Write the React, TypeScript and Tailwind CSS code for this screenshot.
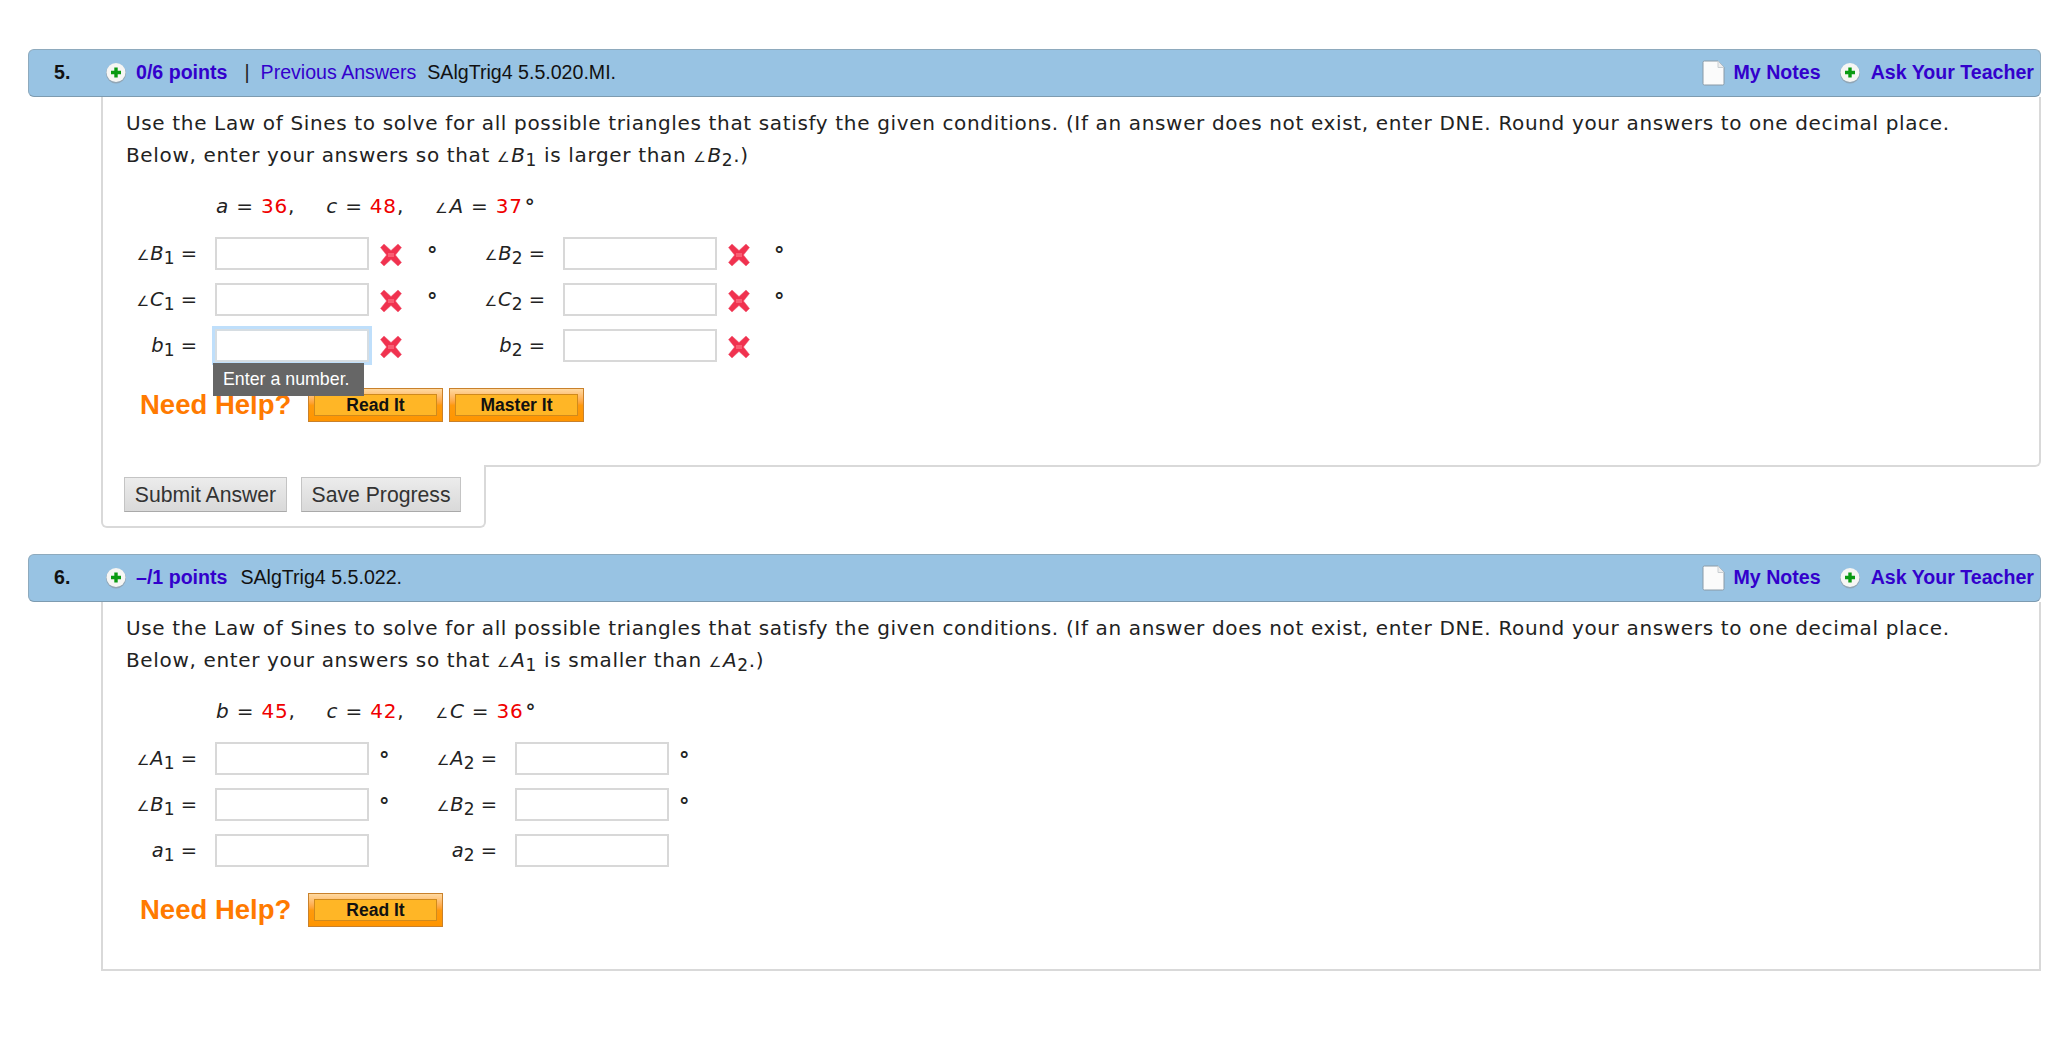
import React from "react";

const Plus = () => (
  <svg width="22" height="22" viewBox="0 0 22 22" className="shrink-0">
    <circle cx="11" cy="11.5" r="10" fill="#8f9aa3" opacity="0.7" />
    <circle cx="11" cy="10.5" r="9.5" fill="#f6f6f4" />
    <path d="M9.3 5.5h3.4v3.3H16v3.4h-3.3v3.3H9.3v-3.3H6V8.8h3.3z" fill="#0a9a12" />
  </svg>
);

const Note = () => (
  <svg width="23" height="26" viewBox="0 0 23 26" className="shrink-0">
    <path d="M1 2.5a1.5 1.5 0 0 1 1.5-1.5H16l6 6.5V23.5a1.5 1.5 0 0 1-1.5 1.5h-18A1.5 1.5 0 0 1 1 23.5z" fill="#fbfbfb" stroke="#8a9aa6" />
    <path d="M16 1v6.5h6" fill="#eeeeee" stroke="#c8ced2" />
  </svg>
);

const Cross = () => (
  <svg width="22" height="24" viewBox="0 0 22 24" className="shrink-0">
    <path d="M4 1 11 7.5 18 1l3.5 3.5L15.5 12l6 7.5L18 23l-7-6.5L4 23 .5 19.5l6-7.5-6-7.5z" fill="#f0324f" stroke="#f06078" strokeWidth="0.5" />
    <path d="M8 10h6v4H8z" fill="#ff7a8a" opacity="0.6" />
  </svg>
);

const M = ({ children }: { children: React.ReactNode }) => <i className="italic">{children}</i>;
const Ang = () => <span className="text-[14px] italic mr-[1px]">∠</span>;
const R = ({ children }: { children: React.ReactNode }) => <span className="text-[#f00000]">{children}</span>;

type CellProps = {
  label: React.ReactNode;
  width: string;
  degree?: string;
  cross?: boolean;
  focus?: boolean;
};

const Cell = ({ label, width, degree, cross, focus }: CellProps) => (
  <div className={`flex h-[33px] items-center ${width}`}>
    <div className="w-[72px] text-right text-[19.5px] whitespace-nowrap text-[#222]">{label}</div>
    <div
      className={`ml-[18px] h-[33px] w-[154px] border-2 bg-white ${
        focus ? "border-[#d6dde2] shadow-[0_0_0_3px_#bfdffb]" : "border-[#d8d8d8]"
      }`}
    />
    {cross && (
      <div className="ml-[11px] mt-[3px]">
        <Cross />
      </div>
    )}
    {degree && <span className={`${degree} mt-[5px] text-[21px] font-bold text-[#222]`}>°</span>}
  </div>
);

const Sub = ({ children }: { children: React.ReactNode }) => <sub className="not-italic text-[17px]">{children}</sub>;

const Header = ({ num, children }: { num: string; children: React.ReactNode }) => (
  <div className="ml-[28px] mr-[5px] flex h-[48px] items-center rounded-[6px] border border-[#8eaabd] border-b-[#7d9bb0] bg-[#98c3e3] pl-[25px] pr-[6px] font-['Liberation_Sans',sans-serif] text-[19.6px] text-[#111]">
    <span className="w-[51px] font-bold">{num}</span>
    <Plus />
    {children}
    <div className="ml-auto flex items-center font-bold text-[#3300cc]">
      <Note />
      <span className="ml-[9px]">My Notes</span>
      <span className="ml-[18px]">
        <Plus />
      </span>
      <span className="ml-[10px]">Ask Your Teacher</span>
    </div>
  </div>
);

const Btn = ({ children }: { children: React.ReactNode }) => (
  <div className="h-[34px] w-[135px] border border-[#c9812b] bg-gradient-to-b from-[#ffd9a0] via-[#ff9a0c] to-[#ff9500] p-[5px]">
    <div className="flex h-full items-center justify-center border border-[#d08a1c] bg-[#ffb626] text-[17.5px] font-bold text-[#111]">
      {children}
    </div>
  </div>
);

const Help = ({ children, top }: { children: React.ReactNode; top: string }) => (
  <div className={`${top} ml-[37px] flex items-center font-['Liberation_Sans',sans-serif]`}>
    <span className="w-[168px] whitespace-nowrap text-[27.5px] font-bold leading-[34px] text-[#ff7a00]">Need Help?</span>
    <div className="flex gap-[6px]">{children}</div>
  </div>
);

const Prompt = ({ children }: { children: React.ReactNode }) => (
  <p className="ml-[23px] whitespace-nowrap text-[20px] leading-[32px] tracking-[0.65px] text-[#222]">{children}</p>
);

const SubmitBtn = ({ w, children }: { w: string; children: React.ReactNode }) => (
  <div className={`${w} flex h-[35px] items-center justify-center border border-[#c4c4c4] border-b-[#a9a9a9] bg-gradient-to-b from-[#ececec] to-[#d9d9d9] text-[21.2px] text-[#333]`}>
    {children}
  </div>
);

const GIV = "ml-[113px] text-[20px] tracking-[0.8px] text-[#222] whitespace-nowrap";
const SP = "inline-block w-[31px]";
const Deg = () => <b className="ml-[2px] font-bold">°</b>;

export default function App() {
  return (
    <div className="h-[1047px] w-[2046px] overflow-hidden bg-white pt-[49px] font-['DejaVu_Sans',sans-serif]">
      <Header num="5.">
        <span className="ml-[9px] font-bold text-[#3300cc]">0/6 points</span>
        <span className="ml-[17px] text-[#222]">|</span>
        <span className="ml-[11px] text-[#3300cc]">Previous Answers</span>
        <span className="ml-[11px]">SAlgTrig4 5.5.020.MI.</span>
      </Header>

      <div className="ml-[101px] mr-[5px] h-[370px] rounded-br-[6px] border-x-2 border-b-2 border-[#d9d9d9] pt-[10px]">
        <Prompt>
          Use the Law of Sines to solve for all possible triangles that satisfy the given conditions. (If an answer does not exist, enter DNE. Round your answers to one decimal place.
          <br />
          Below, enter your answers so that <Ang /><M>B</M><Sub>1</Sub> is larger than <Ang /><M>B</M><Sub>2</Sub>.)
        </Prompt>
        <div className={`mt-[18px] ${GIV}`}>
          <M>a</M> = <R>36</R>,<span className={SP} /><M>c</M> = <R>48</R>,<span className={SP} /><Ang /><M>A</M> = <R>37</R><Deg />
        </div>
        <div className="relative mt-[16px] ml-[22px] flex flex-col gap-[13px]">
          <div className="flex">
            <Cell width="w-[348px]" cross degree="ml-[25px]" label={<><Ang /><M>B</M><Sub>1</Sub> =</>} />
            <Cell width="w-[348px]" cross degree="ml-[24px]" label={<><Ang /><M>B</M><Sub>2</Sub> =</>} />
          </div>
          <div className="flex">
            <Cell width="w-[348px]" cross degree="ml-[25px]" label={<><Ang /><M>C</M><Sub>1</Sub> =</>} />
            <Cell width="w-[348px]" cross degree="ml-[24px]" label={<><Ang /><M>C</M><Sub>2</Sub> =</>} />
          </div>
          <div className="flex">
            <Cell width="w-[348px]" cross focus label={<><M>b</M><Sub>1</Sub> =</>} />
            <Cell width="w-[348px]" cross label={<><M>b</M><Sub>2</Sub> =</>} />
          </div>
          <div className="absolute left-[88px] top-[126px] z-10 flex h-[33px] w-[151px] items-center bg-[#666666] pl-[10px] font-['Liberation_Sans',sans-serif] text-[17.8px] text-white">
            Enter a number.
          </div>
        </div>
        <Help top="mt-[26px]">
          <Btn>Read It</Btn>
          <Btn>Master It</Btn>
        </Help>
      </div>
      <div className="relative z-10 ml-[101px] -mt-[2px] flex h-[63px] w-[385px] gap-[14px] rounded-b-[6px] border-x-2 border-b-2 border-[#d9d9d9] bg-white pl-[21px] pt-[12px] font-['Liberation_Sans',sans-serif]">
        <SubmitBtn w="w-[163px]">Submit Answer</SubmitBtn>
        <SubmitBtn w="w-[160px]">Save Progress</SubmitBtn>
      </div>

      <div className="mt-[26px]">
        <Header num="6.">
          <span className="ml-[9px] font-bold text-[#3300cc]">–/1 points</span>
          <span className="ml-[13px]">SAlgTrig4 5.5.022.</span>
        </Header>
      </div>
      <div className="ml-[101px] mr-[5px] h-[369px] border-x-2 border-b-2 border-[#d9d9d9] pt-[10px]">
        <Prompt>
          Use the Law of Sines to solve for all possible triangles that satisfy the given conditions. (If an answer does not exist, enter DNE. Round your answers to one decimal place.
          <br />
          Below, enter your answers so that <Ang /><M>A</M><Sub>1</Sub> is smaller than <Ang /><M>A</M><Sub>2</Sub>.)
        </Prompt>
        <div className={`mt-[18px] ${GIV}`}>
          <M>b</M> = <R>45</R>,<span className={SP} /><M>c</M> = <R>42</R>,<span className={SP} /><Ang /><M>C</M> = <R>36</R><Deg />
        </div>
        <div className="mt-[16px] ml-[22px] flex flex-col gap-[13px]">
          <div className="flex">
            <Cell width="w-[300px]" degree="ml-[10px]" label={<><Ang /><M>A</M><Sub>1</Sub> =</>} />
            <Cell width="w-[300px]" degree="ml-[10px]" label={<><Ang /><M>A</M><Sub>2</Sub> =</>} />
          </div>
          <div className="flex">
            <Cell width="w-[300px]" degree="ml-[10px]" label={<><Ang /><M>B</M><Sub>1</Sub> =</>} />
            <Cell width="w-[300px]" degree="ml-[10px]" label={<><Ang /><M>B</M><Sub>2</Sub> =</>} />
          </div>
          <div className="flex">
            <Cell width="w-[300px]" label={<><M>a</M><Sub>1</Sub> =</>} />
            <Cell width="w-[300px]" label={<><M>a</M><Sub>2</Sub> =</>} />
          </div>
        </div>
        <Help top="mt-[26px]">
          <Btn>Read It</Btn>
        </Help>
      </div>
    </div>
  );
}
